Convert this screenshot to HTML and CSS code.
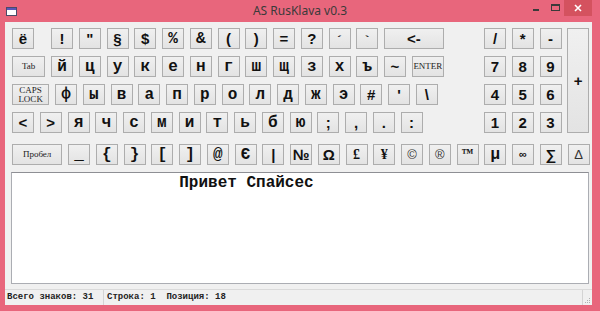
FILE: index.html
```html
<!DOCTYPE html>
<html lang="ru">
<head>
  <meta charset="UTF-8">
  <title>AS RusKlava v0.3</title>
  <link rel="stylesheet" href="styles.css">
</head>
<body>
  <div class="window">
    <div class="titlebar">
      <svg class="app-icon" width="11" height="9" viewBox="0 0 11 9">
        <rect x="0.5" y="0.5" width="10" height="8" fill="#fff" stroke="#4a4a68"/>
        <rect x="1" y="1" width="9" height="2" fill="#5b56b8"/>
      </svg>
      <span class="title">AS RusKlava v0.3</span>
      <div class="controls">
        <svg class="ctl" width="18" height="16" viewBox="0 0 18 16"><rect x="6" y="9" width="6" height="2" fill="#3a3a3a"/></svg>
        <svg class="ctl" width="19" height="16" viewBox="0 0 19 16"><rect x="6.5" y="4.5" width="8" height="6" fill="none" stroke="#3a3a3a"/><rect x="6" y="4" width="9" height="2" fill="#3a3a3a"/></svg>
        <svg class="ctl close" width="28" height="16" viewBox="0 0 28 16"><path d="M11 5 L17 11 M17 5 L11 11" stroke="#fff" stroke-width="1.6"/></svg>
      </div>
    </div>

    <div class="client">
      <div class="keyboard">
        <div class="keys-top">
          <div class="main">
            <div class="row">
              <button class="key sans wide-gap">ё</button>
              <button class="key sans">!</button>
              <button class="key sans">"</button>
              <button class="key sans">§</button>
              <button class="key sans">$</button>
              <button class="key">%</button>
              <button class="key">&amp;</button>
              <button class="key sans">(</button>
              <button class="key sans">)</button>
              <button class="key sans">=</button>
              <button class="key sans">?</button>
              <button class="key tick">´</button>
              <button class="key tick">`</button>
              <button class="key sans backspace">&lt;-</button>
            </div>
            <div class="row">
              <button class="key small tab">Tab</button>
              <button class="key">й</button>
              <button class="key">ц</button>
              <button class="key">у</button>
              <button class="key">к</button>
              <button class="key">е</button>
              <button class="key">н</button>
              <button class="key">г</button>
              <button class="key">ш</button>
              <button class="key">щ</button>
              <button class="key">з</button>
              <button class="key">х</button>
              <button class="key">ъ</button>
              <button class="key sans">~</button>
              <button class="key small enter">ENTER</button>
            </div>
            <div class="row">
              <button class="key small caps">CAPS<br>LOCK</button>
              <button class="key">ф</button>
              <button class="key">ы</button>
              <button class="key">в</button>
              <button class="key">а</button>
              <button class="key">п</button>
              <button class="key">р</button>
              <button class="key">о</button>
              <button class="key">л</button>
              <button class="key">д</button>
              <button class="key">ж</button>
              <button class="key">э</button>
              <button class="key sans">#</button>
              <button class="key sans">'</button>
              <button class="key sans">\</button>
            </div>
            <div class="row">
              <button class="key sans">&lt;</button>
              <button class="key sans">&gt;</button>
              <button class="key">я</button>
              <button class="key">ч</button>
              <button class="key">с</button>
              <button class="key">м</button>
              <button class="key">и</button>
              <button class="key">т</button>
              <button class="key">ь</button>
              <button class="key">б</button>
              <button class="key">ю</button>
              <button class="key sans">;</button>
              <button class="key sans">,</button>
              <button class="key sans">.</button>
              <button class="key sans">:</button>
            </div>
          </div>

          <div class="numpad">
            <button class="key sans">/</button>
            <button class="key sans">*</button>
            <button class="key sans">-</button>
            <button class="key sans plus">+</button>
            <button class="key sans">7</button>
            <button class="key sans">8</button>
            <button class="key sans">9</button>
            <button class="key sans">4</button>
            <button class="key sans">5</button>
            <button class="key sans">6</button>
            <button class="key sans">1</button>
            <button class="key sans">2</button>
            <button class="key sans">3</button>
          </div>
        </div>

        <div class="row extra">
          <button class="key small space">Пробел</button>
          <button class="key">_</button>
          <button class="key">{</button>
          <button class="key">}</button>
          <button class="key">[</button>
          <button class="key">]</button>
          <button class="key">@</button>
          <button class="key">Є</button>
          <button class="key sans">|</button>
          <button class="key sans">№</button>
          <button class="key sans">Ω</button>
          <button class="key serif">£</button>
          <button class="key serif">¥</button>
          <button class="key light">©</button>
          <button class="key light">®</button>
          <button class="key serif tm">™</button>
          <button class="key">µ</button>
          <button class="key sans inf">∞</button>
          <button class="key sans">∑</button>
          <button class="key light">Δ</button>
        </div>
      </div>

      <div class="editor">                 Привет Спайсес</div>

      <div class="statusbar">
        <div class="panel first">Всего знаков: 31</div>
        <div class="panel second">Строка: 1  Позиция: 18</div>
        <div class="grip">
          <svg width="6" height="6" viewBox="0 0 6 6">
            <rect x="4" y="0" width="1" height="1" fill="#b0b0b0"/>
            <rect x="2" y="2" width="1" height="1" fill="#b0b0b0"/>
            <rect x="4" y="2" width="1" height="1" fill="#b0b0b0"/>
            <rect x="0" y="4" width="1" height="1" fill="#b0b0b0"/>
            <rect x="2" y="4" width="1" height="1" fill="#b0b0b0"/>
            <rect x="4" y="4" width="1" height="1" fill="#b0b0b0"/>
          </svg>
        </div>
      </div>
    </div>
  </div>
</body>
</html>
```

FILE: styles.css
```css
body {
  margin: 0;
  background-color: #e8667c;
  font-family: "Liberation Sans", Arial, sans-serif;
}

.window {
  width: 600px;
  height: 311px;
  display: flex;
  flex-direction: column;
}

/* title bar */
.titlebar {
  height: 22px;
  display: grid;
  grid-template-columns: 1fr auto 1fr;
  align-items: start;
}

.app-icon {
  margin: 7px 0 0 6px;
}

.title {
  font-family: "Noto Sans", "Open Sans", sans-serif;
  font-size: 12px;
  line-height: 22px;
  color: #3a3a3a;
}

.controls {
  justify-self: end;
  display: flex;
  margin-right: 8px;
}

.ctl.close {
  background-color: #d4525f;
}

/* client area */
.client {
  flex: 1;
  margin: 0 8px 6px 5px;
  background-color: #f0f0f0;
  display: flex;
  flex-direction: column;
}

.keyboard {
  padding: 6px 0 0 7px;
}

.keys-top {
  display: flex;
}

.main {
  width: 432px;
  display: flex;
  flex-direction: column;
  gap: 7px;
}

.row {
  display: flex;
  gap: 5.75px;
  height: 21px;
}

.row.extra {
  margin-top: 11px;
}

.key {
  width: 22px;
  height: 21px;
  flex: none;
  box-sizing: border-box;
  padding: 0;
  border: 1px solid #adadad;
  background: linear-gradient(#f0f0f0, #e3e3e3);
  display: flex;
  align-items: center;
  justify-content: center;
  font-family: "Liberation Mono", "Courier New", monospace;
  font-weight: bold;
  font-size: 16px;
  color: #111;
  line-height: 1;
}

.key.sans {
  font-family: "Liberation Sans", Arial, sans-serif;
  font-size: 15px;
}

.key.serif {
  font-family: "Liberation Serif", "Times New Roman", serif;
  font-size: 14px;
}

.key.light {
  font-family: "Liberation Sans", Arial, sans-serif;
  font-weight: normal;
  font-size: 13px;
  color: #333;
}

.key.tick {
  font-size: 13px;
  padding-top: 5px;
}

.key.tm {
  font-size: 12px;
  padding-bottom: 4px;
}

.key.inf {
  font-size: 11px;
}

.key.small {
  font-family: "Liberation Serif", "Times New Roman", serif;
  font-weight: normal;
  font-size: 9px;
  line-height: 9px;
  color: #222;
}

.wide-gap {
  margin-right: 11.25px;
}

.backspace {
  width: 60px;
}

.tab {
  width: 33.25px;
}

.enter {
  width: 32.25px;
}

.caps {
  width: 37.25px;
}

.space {
  width: 50.25px;
}

/* numeric block */
.numpad {
  margin-left: 40px;
  display: grid;
  grid-template-columns: repeat(4, 22px);
  grid-template-rows: repeat(4, 21px);
  column-gap: 5.75px;
  row-gap: 7px;
}

.numpad .plus {
  grid-column: 4;
  grid-row: 1 / span 4;
  height: auto;
}

/* text field */
.editor {
  margin: 7px 3px 0 6px;
  height: 112px;
  box-sizing: border-box;
  border: 1px solid #abadb3;
  border-top-color: #8e8f94;
  background-color: #fff;
  padding: 1px 4px;
  white-space: pre;
  font-family: "Liberation Mono", "Courier New", monospace;
  font-weight: bold;
  font-size: 16px;
  line-height: 18px;
  color: #111;
}

/* status bar */
.statusbar {
  margin-top: 5px;
  height: 16px;
  box-sizing: border-box;
  border-top: 1px solid #dadada;
  display: flex;
  font-family: "Liberation Mono", "Courier New", monospace;
  font-weight: bold;
  font-size: 9px;
  line-height: 15px;
  color: #222;
}

.panel {
  white-space: pre;
  border-right: 1px solid #d4d4d4;
}

.panel.first {
  width: 99px;
  box-sizing: border-box;
  padding-left: 2px;
}

.panel.second {
  flex: 1;
  padding-left: 3px;
}

.grip {
  width: 9px;
  display: flex;
  align-items: flex-end;
  justify-content: flex-end;
  padding: 0 1px 1px 0;
  box-sizing: border-box;
}
```
